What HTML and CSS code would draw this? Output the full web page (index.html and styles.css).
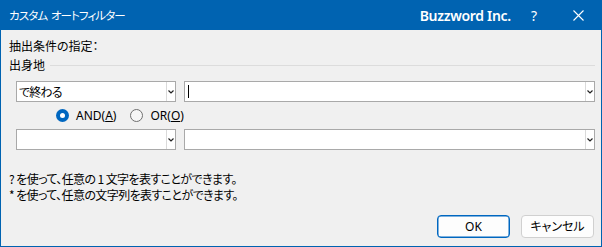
FILE: index.html
```html
<!DOCTYPE html>
<html lang="ja">
<head>
<meta charset="utf-8">
<title>カスタム オートフィルター</title>
<link rel="stylesheet" href="styles.css">
</head>
<body>
<div class="window">
  <div class="titlebar">
    <span class="title">カスタム オートフィルター</span>
    <span class="brand">Buzzword Inc.</span>
    <span class="help">?</span>
    <span class="close"><svg width="11" height="11" viewBox="0 0 11 11"><path d="M0.5 0.5 L10.5 10.5 M10.5 0.5 L0.5 10.5" stroke="#fff" stroke-width="1.1" fill="none"/></svg></span>
  </div>
  <div class="content">
    <div class="label first">抽出条件の指定：</div>
    <div class="group">
      <span class="label">出身地</span>
      <span class="rule"></span>
    </div>
    <div class="row">
      <div class="combo small">
        <span class="value">で終わる</span>
        <span class="arrow"><svg width="6" height="4" viewBox="0 0 6 4"><path d="M0.5 0.5 L3 3 L5.5 0.5" stroke="#222" stroke-width="1.2" fill="none"/></svg></span>
      </div>
      <div class="combo large">
        <span class="value"><span class="caret"></span></span>
        <span class="arrow"><svg width="6" height="4" viewBox="0 0 6 4"><path d="M0.5 0.5 L3 3 L5.5 0.5" stroke="#222" stroke-width="1.2" fill="none"/></svg></span>
      </div>
    </div>
    <div class="radios">
      <label class="radio"><span class="dot on"></span><span>AND(<u>A</u>)</span></label>
      <label class="radio"><span class="dot"></span><span>OR(<u>O</u>)</span></label>
    </div>
    <div class="row">
      <div class="combo small">
        <span class="value"></span>
        <span class="arrow"><svg width="6" height="4" viewBox="0 0 6 4"><path d="M0.5 0.5 L3 3 L5.5 0.5" stroke="#222" stroke-width="1.2" fill="none"/></svg></span>
      </div>
      <div class="combo large">
        <span class="value"></span>
        <span class="arrow"><svg width="6" height="4" viewBox="0 0 6 4"><path d="M0.5 0.5 L3 3 L5.5 0.5" stroke="#222" stroke-width="1.2" fill="none"/></svg></span>
      </div>
    </div>
    <div class="hints">
      <div class="hint">? を使って、任意の 1 文字を表すことができます。</div>
      <div class="hint">* を使って、任意の文字列を表すことができます。</div>
    </div>
    <div class="buttons">
      <button class="btn default">OK</button>
      <button class="btn">キャンセル</button>
    </div>
  </div>
</div>
</body>
</html>
```

FILE: styles.css
```css
* { box-sizing: border-box; }
html, body { margin: 0; padding: 0; }
body {
  width: 602px;
  height: 247px;
  overflow: hidden;
  font-family: "Noto Sans", "Noto Sans CJK JP", sans-serif;
  font-size: 12px;
  color: #000;
  background: #f0f0f0;
  font-feature-settings: "palt";
}
.window {
  width: 602px;
  height: 247px;
  border: 1px solid #0063b1;
  background: #f0f0f0;
  display: flex;
  flex-direction: column;
}
.titlebar {
  height: 29px;
  background: #0063b1;
  color: #fff;
  display: flex;
  align-items: center;
  padding-left: 8px;
}
.title {
  font-family: "Noto Sans CJK JP", sans-serif;
  font-size: 11.5px;
  line-height: 16px;
  letter-spacing: -0.9px;
  word-spacing: 2px;
  flex: 1;
  margin-top: -1px;
}
.brand {
  font-family: "Noto Sans", sans-serif;
  font-weight: 600;
  font-size: 14px;
  line-height: 18px;
  letter-spacing: -0.3px;
  margin-right: 20px;
}
.help {
  font-family: "Noto Sans", sans-serif;
  font-size: 14px;
  line-height: 18px;
  margin-right: 36px;
}
.close {
  display: flex;
  margin-right: 17px;
}
.content {
  flex: 1;
  display: flex;
  flex-direction: column;
  padding: 0 6px 8px 8px;
}
.label {
  font-family: "Noto Sans CJK JP", sans-serif;
  line-height: 16px;
}
.label.first { margin-top: 8px; }
.group {
  display: flex;
  align-items: center;
  margin-top: 3px;
}
.rule {
  flex: 1;
  height: 1px;
  background: #dcdcdc;
  margin-left: 5px;
  margin-top: 1px;
}
.row {
  display: flex;
  gap: 8px;
  padding-left: 7px;
}
.group + .row { margin-top: 8px; }
.combo {
  height: 21px;
  border: 1px solid #a9a9a9;
  background: #fff;
  display: flex;
}
.combo.small { width: 160px; }
.combo.large { flex: 1; }
.value {
  flex: 1;
  font-family: "Noto Sans CJK JP", sans-serif;
  line-height: 19px;
  letter-spacing: -0.8px;
  padding-left: 2px;
  display: flex;
  align-items: center;
}
.caret {
  width: 1px;
  height: 13px;
  background: #000;
  margin-left: 1px;
}
.arrow {
  width: 9px;
  border-left: 1px solid #dadada;
  display: flex;
  align-items: center;
  justify-content: center;
  padding-top: 1px;
}
.radios {
  height: 27px;
  display: flex;
  align-items: center;
  padding-left: 47px;
  gap: 14px;
}
.radio {
  display: flex;
  align-items: center;
  gap: 7px;
  font-family: "Noto Sans", "Noto Sans CJK JP", sans-serif;
  font-size: 12px;
  line-height: 16px;
}
.dot {
  width: 13px;
  height: 13px;
  border-radius: 50%;
  border: 1px solid #6f6f6f;
  background: #f6f6f6;
  position: relative;
}
.dot.on {
  border: none;
  background: #0067c0;
}
.dot.on::after {
  content: "";
  position: absolute;
  left: 4px;
  top: 4px;
  width: 5px;
  height: 5px;
  border-radius: 50%;
  background: #fff;
}
.hints {
  margin-top: 21px;
  display: flex;
  flex-direction: column;
}
.hint {
  font-family: "Noto Sans CJK JP", sans-serif;
  line-height: 15.5px;
  letter-spacing: -0.6px;
}
.buttons {
  margin-top: auto;
  display: flex;
  justify-content: flex-end;
  gap: 11px;
  padding-right: 1px;
}
.btn {
  width: 73px;
  height: 23px;
  border: 1px solid #d0d0d0;
  border-radius: 4px;
  background: #fdfdfd;
  font-family: "Noto Sans", "Noto Sans CJK JP", sans-serif;
  font-feature-settings: "palt";
  font-size: 12px;
  color: #000;
  padding: 0;
  line-height: 21px;
}
.btn.default {
  border-color: #0067c0;
  box-shadow: inset 0 0 0 0.5px #0067c0;
}
```
